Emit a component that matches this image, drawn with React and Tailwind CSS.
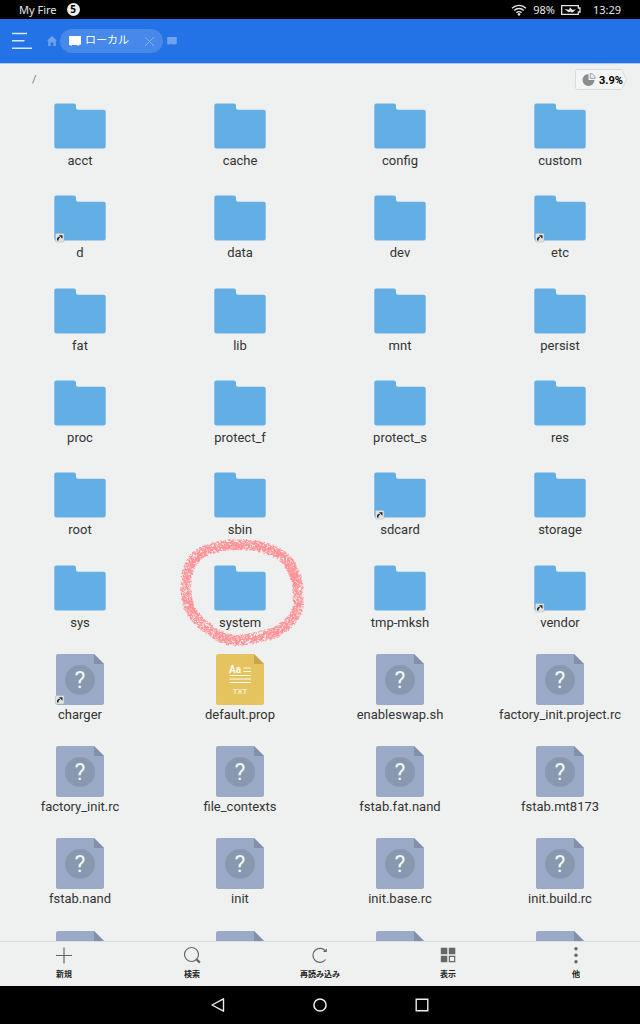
import React from 'react';

const FILES = [
  { name: 'acct', type: 'folder' },
  { name: 'cache', type: 'folder' },
  { name: 'config', type: 'folder' },
  { name: 'custom', type: 'folder' },
  { name: 'd', type: 'folder', link: true },
  { name: 'data', type: 'folder' },
  { name: 'dev', type: 'folder' },
  { name: 'etc', type: 'folder', link: true },
  { name: 'fat', type: 'folder' },
  { name: 'lib', type: 'folder' },
  { name: 'mnt', type: 'folder' },
  { name: 'persist', type: 'folder' },
  { name: 'proc', type: 'folder' },
  { name: 'protect_f', type: 'folder' },
  { name: 'protect_s', type: 'folder' },
  { name: 'res', type: 'folder' },
  { name: 'root', type: 'folder' },
  { name: 'sbin', type: 'folder' },
  { name: 'sdcard', type: 'folder', link: true },
  { name: 'storage', type: 'folder' },
  { name: 'sys', type: 'folder' },
  { name: 'system', type: 'folder', marked: true },
  { name: 'tmp-mksh', type: 'folder' },
  { name: 'vendor', type: 'folder', link: true },
  { name: 'charger', type: 'unknown', link: true },
  { name: 'default.prop', type: 'text' },
  { name: 'enableswap.sh', type: 'unknown' },
  { name: 'factory_init.project.rc', type: 'unknown' },
  { name: 'factory_init.rc', type: 'unknown' },
  { name: 'file_contexts', type: 'unknown' },
  { name: 'fstab.fat.nand', type: 'unknown' },
  { name: 'fstab.mt8173', type: 'unknown' },
  { name: 'fstab.nand', type: 'unknown' },
  { name: 'init', type: 'unknown' },
  { name: 'init.base.rc', type: 'unknown' },
  { name: 'init.build.rc', type: 'unknown' },
  { type: 'blank' },
  { type: 'blank' },
  { type: 'blank' },
  { type: 'blank' },
];

// Outline of the hand-drawn ring
const RING = [
  [65, 8], [88, 11], [107, 20], [117, 33], [122, 50], [121, 76], [105, 93], [85, 100],
  [58, 104], [38, 96], [18, 78], [11, 60], [12, 36], [23, 18], [45, 10],
];

function crayonPath() {
  let seed = 7;
  const rand = () => {
    seed = (seed * 16807) % 2147483647;
    return seed / 2147483647;
  };
  const n = RING.length;
  let d = '';
  for (let k = 0; k < 4800; k++) {
    const u = rand() * n;
    const i = Math.floor(u);
    const t = u - i;
    const [a, b, c, e] = [RING[(i + n - 1) % n], RING[i % n], RING[(i + 1) % n], RING[(i + 2) % n]];
    const at = j => 0.5 * (2 * b[j] + (c[j] - a[j]) * t + (2 * a[j] - 5 * b[j] + 4 * c[j] - e[j]) * t * t + (3 * b[j] - a[j] - 3 * c[j] + e[j]) * t * t * t);
    const r = 5.6 * Math.sqrt(rand());
    const w = rand() * Math.PI * 2;
    d += `M${(at(0) + r * Math.cos(w)).toFixed(1)} ${(at(1) + r * Math.sin(w)).toFixed(1)}h1v1h-1z`;
  }
  return d;
}

const CRAYON = crayonPath();

function FileIcon({ type, link }) {
  return (
    <svg viewBox="0 0 54 52" className="w-[54px] h-[52px] shrink-0" aria-hidden="true">
      {type === 'folder' && (
        <path d="M3.3 3.500H21a2 2 0 0 1 2 2v2.300a2 2 0 0 0 2 2h25.700a2 2 0 0 1 2 2v34.800a2 2 0 0 1-2 2H3.300a2 2 0 0 1-2-2V5.500a2 2 0 0 1 2-2z" fill="#64aee6" />
      )}
      {type !== 'folder' && (
        <>
          <path d="M5 0h36l10 10v39a2 2 0 0 1-2 2H5a2 2 0 0 1-2-2V2a2 2 0 0 1 2-2z" fill={type === 'text' ? '#e5c35f' : '#9aaac6'} />
          <path d="M41 0l10 10H41z" fill={type === 'text' ? '#c6a650' : '#8291a6'} />
        </>
      )}
      {type === 'unknown' && (
        <>
          <circle cx="27" cy="26" r="15" fill="#8799ae" />
          <text x="27" y="34" textAnchor="middle" fontSize="23" fontFamily="Roboto, sans-serif" fill="#f4f6f8">?</text>
        </>
      )}
      {type === 'text' && (
        <>
          <text x="16" y="19" fontSize="10" fontWeight="700" fontFamily="Roboto, sans-serif" fill="#fffbe9">Aa</text>
          <path d="M30.500 14h7.500M30.500 17.500h7.500M16.500 21.500h21.500M16.500 25h21.500M16.500 28.500h21.500" stroke="#fffbe9" strokeWidth="1.200" />
          <text x="27" y="40" textAnchor="middle" fontSize="8" fontFamily="Roboto, sans-serif" fill="#fffbe9">TXT</text>
        </>
      )}
      {link && (
        <>
          <rect x="2.500" y="41.500" width="8.500" height="8.500" rx="1" fill="#dfe3e6" stroke="#a9b4bc" strokeWidth=".5" />
          <path d="M4.800 48.500c-.3-2 .5-3 2-3.200" fill="none" stroke="#222" strokeWidth="1.600" />
          <path d="M6 43.300h3.500v3.500z" fill="#222" />
        </>
      )}
    </svg>
  );
}

function FileItem({ file }) {
  return (
    <li className="relative flex justify-center">
      <button className="flex flex-col items-center self-start">
        <FileIcon type={file.type} link={file.link} />
        {file.name && <span className="text-[13px] leading-[18px] text-[#333] whitespace-nowrap">{file.name}</span>}
      </button>
      {file.marked && (
        <svg viewBox="0 0 130 112" className="absolute -top-[26px] left-1/2 -translate-x-1/2 w-[130px] h-[112px] pointer-events-none z-10" aria-hidden="true">
          <path d={CRAYON} fill="#ff9296" />
        </svg>
      )}
    </li>
  );
}

function ToolButton({ label, children }) {
  return (
    <button className="flex-1 flex flex-col items-center pt-1 gap-1">
      <svg viewBox="0 0 18 18" className="w-[18px] h-[18px]" fill="none" stroke="#666" strokeWidth="1.2" aria-hidden="true">{children}</svg>
      <span className="text-[8px] leading-[14px] font-bold text-[#222]">{label}</span>
    </button>
  );
}

// Small storage card, used in the tab and for the neighbouring one
function CardIcon({ className }) {
  return (
    <svg viewBox="0 0 12 10" className={className} fill="currentColor" aria-hidden="true">
      <path d="M0 0h12v8.500l-2 .5-1 1-1-1H3l-1 1-1-1H0z" />
    </svg>
  );
}

export default function App() {
  return (
    <div className="h-screen flex flex-col overflow-hidden bg-[#eff1f1] font-[Roboto,'Noto_Sans_CJK_JP',sans-serif]">
      {/* Status bar */}
      <div className="h-[19px] shrink-0 bg-black text-[#e6e6e6] flex items-center px-[19px] text-[11px] leading-4 font-['Noto_Sans',sans-serif]">
        <span>My Fire</span>
        <span className="ml-2.5 w-[13px] h-[13px] rounded-full bg-[#eee] text-black font-bold text-[10px] leading-[13px] text-center">5</span>
        <svg viewBox="0 0 16 12" className="ml-auto w-4 h-3" fill="none" stroke="#e6e6e6" strokeWidth="1.4" aria-hidden="true">
          <path d="M1 4.200a10 10 0 0 1 14 0M3.200 6.500a6.800 6.800 0 0 1 9.600 0M5.400 8.700a3.700 3.700 0 0 1 5.200 0" />
          <path d="M8 8.800l1.700 1.400L8 12l-1.700-1.800z" fill="#e6e6e6" stroke="none" />
        </svg>
        <span className="ml-1.5">98%</span>
        <svg viewBox="0 0 20 10" className="ml-1.5 w-5 h-2.5" aria-hidden="true">
          <path d="M.7.7h16.600v2.300h1.700v4h-1.700v2.300H.7z" fill="none" stroke="#e6e6e6" strokeWidth="1.300" />
          <path d="M3.500 4l4.500.7 1-2.500 2.300 2.600 3.700-.3-4 3.300-1.500-1.300-2 .8z" fill="#e6e6e6" />
        </svg>
        <span className="ml-3">13:29</span>
      </div>

      {/* Header */}
      <header className="h-[45px] shrink-0 bg-[#2373e6] border-b border-[#a9c8f3] flex items-center pl-3">
        <button aria-label="Menu">
          <svg viewBox="0 0 20 18" className="w-5 h-[18px]" stroke="#dbe8fb" strokeWidth="1.600" aria-hidden="true">
            <path d="M0 1.500h15M0 8.800h12.500M0 16.200h20" />
          </svg>
        </button>
        <button aria-label="Home" className="ml-[15px]">
          <svg viewBox="0 0 10 10" className="w-2.5 h-2.5" fill="#6da3ef" aria-hidden="true">
            <path d="M5 0l5 4.800H8.800V10H6.300V6.500H3.700V10H1.200V4.800H0z" />
          </svg>
        </button>
        <div className="ml-[3px] h-6 w-[103px] rounded-full bg-[#4689ea] flex items-center px-[9px] text-white">
          <CardIcon className="w-3 h-2.5" />
          <span className="ml-1 text-[11px] leading-4">ローカル</span>
          <button aria-label="Close tab" className="ml-auto">
            <svg viewBox="0 0 9 9" className="w-[9px] h-[9px]" stroke="#85b2f3" strokeWidth="1" aria-hidden="true">
              <path d="M0 0l9 9M9 0L0 9" />
            </svg>
          </button>
        </div>
        <CardIcon className="ml-1 w-2.5 h-2 text-[#6da3ef]" />
      </header>

      {/* Path */}
      <div className="h-9 pt-[5px] shrink-0 flex items-start justify-between pl-8 pr-[13px]">
        <span className="pt-[3px] text-[11px] leading-4 text-[#777]">/</span>
        <div className="relative">
          <svg viewBox="0 0 52 21" className="w-[52px] h-[21px]" aria-hidden="true">
            <path d="M2.500.5h42.500c1.500 0 2 .5 2.500 1.500l4 8.500-4 8.500c-.5 1-1 1.500-2.500 1.500H2.500a2 2 0 0 1-2-2v-16a2 2 0 0 1 2-2z" fill="#f4f5f6" stroke="#d9dbdf" />
            <path d="M13.500 5a6 6 0 1 0 6 6h-6z" fill="#8c8c8c" />
            <path d="M15.300 4.500v4.900h4.900a4.900 4.900 0 0 0-4.900-4.900z" fill="#eee" stroke="#999" strokeWidth=".9" />
          </svg>
          <span className="absolute inset-y-0 left-6 text-[11px] leading-6 font-bold text-black">3.9%</span>
        </div>
      </div>

      {/* Files */}
      <main className="flex-1 min-h-0 overflow-hidden">
        <ul className="grid grid-cols-4 auto-rows-fr h-[923px]">
          {FILES.map((file, i) => <FileItem key={i} file={file} />)}
        </ul>
      </main>

      {/* Toolbar */}
      <footer className="h-[45px] shrink-0 bg-[#eff1f1] border-t border-[#d8dde2] flex items-start">
        <ToolButton label="新規"><path d="M9 1.500v16M1 9.500h16" /></ToolButton>
        <ToolButton label="検索">
          <circle cx="8.500" cy="8.500" r="7" />
          <path d="M13.200 13l3.600 3.600" strokeWidth="2.200" />
        </ToolButton>
        <ToolButton label="再読み込み">
          <path d="M14.600 13.500a7 7 0 1 1 .2-8" />
          <path d="M12 6h3.800V2.500z" fill="#666" stroke="none" />
        </ToolButton>
        <ToolButton label="表示">
          <path d="M1.800 1.800h6.500v6.500H1.800zM9.800 1.800h6.500v6.500H9.800zM1.800 9.800h6.500v6.500H1.800z" fill="#666" stroke="none" />
          <path d="M10.400 10.400h5.300v5.300h-5.300z" />
        </ToolButton>
        <ToolButton label="他">
          <g fill="#666" stroke="none">
            <circle cx="9" cy="2.800" r="1.700" />
            <circle cx="9" cy="9.200" r="1.700" />
            <circle cx="9" cy="15.700" r="1.700" />
          </g>
        </ToolButton>
      </footer>

      {/* System navigation */}
      <nav className="h-[38px] shrink-0 bg-black flex items-center justify-center gap-[88px]">
        <button aria-label="Back">
          <svg viewBox="0 0 14 14" className="w-3.5 h-3.5" fill="none" stroke="#eee" strokeWidth="1.400" strokeLinejoin="round" aria-hidden="true"><path d="M12.500 .8v12.400L1 7z" /></svg>
        </button>
        <button aria-label="Home screen">
          <svg viewBox="0 0 14 14" className="w-3.5 h-3.5" fill="none" stroke="#eee" strokeWidth="1.500" aria-hidden="true"><circle cx="7" cy="7" r="6.100" /></svg>
        </button>
        <button aria-label="Recent apps">
          <svg viewBox="0 0 14 14" className="w-3.5 h-3.5" fill="none" stroke="#eee" strokeWidth="1.400" aria-hidden="true"><path d="M1.200 1.200h11.600v11.600H1.200z" /></svg>
        </button>
      </nav>
    </div>
  );
}
